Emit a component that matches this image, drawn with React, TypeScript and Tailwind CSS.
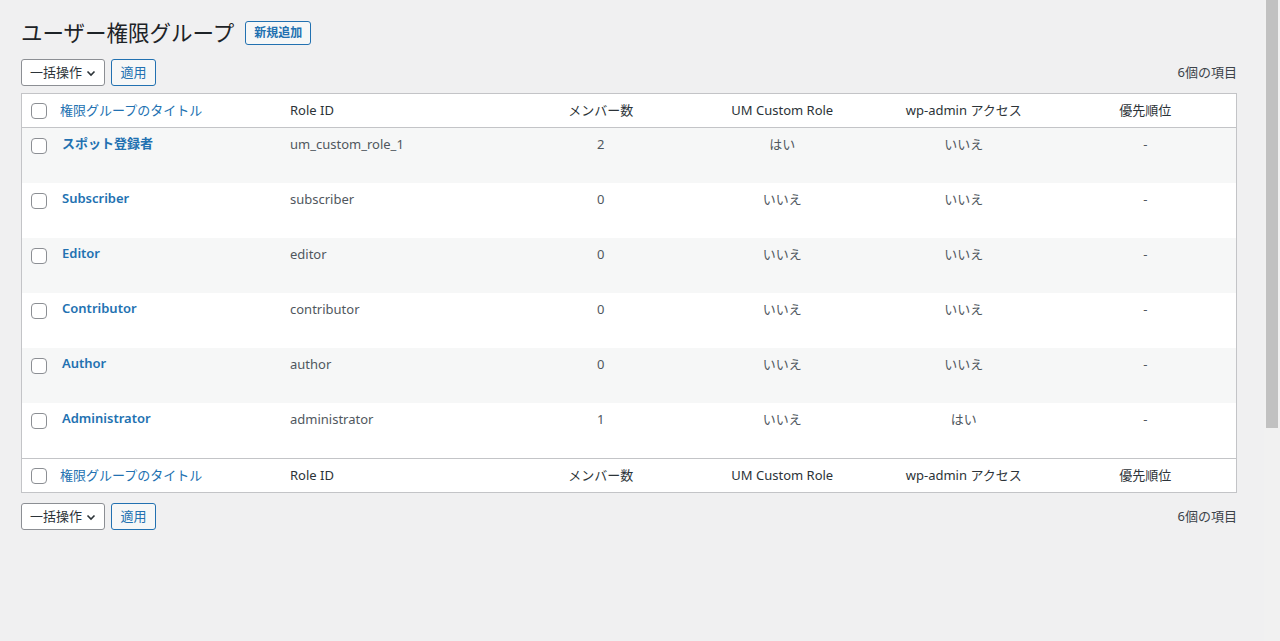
import React from "react";

const rows = [
  { title: "スポット登録者", id: "um_custom_role_1", members: "2", um: "はい", admin: "いいえ", prio: "-" },
  { title: "Subscriber", id: "subscriber", members: "0", um: "いいえ", admin: "いいえ", prio: "-" },
  { title: "Editor", id: "editor", members: "0", um: "いいえ", admin: "いいえ", prio: "-" },
  { title: "Contributor", id: "contributor", members: "0", um: "いいえ", admin: "いいえ", prio: "-" },
  { title: "Author", id: "author", members: "0", um: "いいえ", admin: "いいえ", prio: "-" },
  { title: "Administrator", id: "administrator", members: "1", um: "いいえ", admin: "はい", prio: "-" },
];

const grid = "grid grid-cols-[28px_230px_230px_1fr_1fr_1fr_1fr]";

function Checkbox() {
  return <span className="block w-[16px] h-[16px] rounded-[4px] border border-[#8c8f94] bg-white" />;
}

function HeadRow({ top }: { top?: boolean }) {
  return (
    <div
      className={`${grid} h-[34px] items-center text-[13px] text-[#2c3338] bg-white ${
        top ? "border-b border-[#c3c4c7]" : "border-t border-[#c3c4c7]"
      }`}
    >
      <div className="pl-[9px]">
        <Checkbox />
      </div>
      <div className="pl-[10px] text-[#2271b1]">権限グループのタイトル</div>
      <div className="pl-[10px]">Role ID</div>
      <div className="text-center">メンバー数</div>
      <div className="text-center">UM Custom Role</div>
      <div className="text-center">wp-admin アクセス</div>
      <div className="text-center">優先順位</div>
    </div>
  );
}

function Actions() {
  return (
    <div className="flex items-center justify-between h-[27px]">
      <div className="flex items-center gap-[6px]">
        <div className="flex items-center h-[27px] w-[84px] pl-[8px] pr-[7px] justify-between bg-white border border-[#8c8f94] rounded-[3px] text-[13px] text-[#2c3338]">
          <span>一括操作</span>
          <svg width="12" height="12" viewBox="0 0 12 12" fill="none" stroke="#2c3338" strokeWidth="1.6">
            <path d="M2.5 4.5 6 8l3.5-3.5" />
          </svg>
        </div>
        <div className="flex items-center justify-center h-[27px] w-[45px] bg-[#f6f7f7] border border-[#2271b1] rounded-[3px] text-[13px] text-[#2271b1]">
          適用
        </div>
      </div>
      <div className="text-[13px] text-[#3c434a]">6個の項目</div>
    </div>
  );
}

export default function App() {
  return (
    <div
      className="flex h-[641px] bg-[#f0f0f1] overflow-hidden"
      style={{ fontFamily: '"Noto Sans", "Noto Sans CJK JP", sans-serif' }}
    >
      <main className="flex-1 pl-[21px] pr-[27px] pt-[16px]">
        <div className="flex items-center gap-[11px] h-[33px]">
          <h1 className="text-[21.5px] font-normal text-[#1d2327] leading-none">ユーザー権限グループ</h1>
          <div className="flex items-center h-[24px] px-[8px] border border-[#2271b1] rounded-[3px] bg-[#f6f7f7] text-[12px] font-semibold text-[#2271b1]">
            新規追加
          </div>
        </div>
        <div className="mt-[10px]">
          <Actions />
        </div>
        <div className="mt-[7px] border border-[#c3c4c7] bg-white">
          <HeadRow top />
          {rows.map((r, i) => (
            <div key={r.id} className={`${grid} h-[55px] items-start text-[13px] text-[#50575e] ${i % 2 === 0 ? "bg-[#f6f7f7]" : "bg-white"}`}>
              <div className="pl-[9px] pt-[10px]">
                <Checkbox />
              </div>
              <div className="pl-[12px] pt-[6px] text-[13px] font-semibold text-[#2271b1]">{r.title}</div>
              <div className="pl-[10px] pt-[7px]">{r.id}</div>
              <div className="text-center pt-[7px]">{r.members}</div>
              <div className="text-center pt-[7px]">{r.um}</div>
              <div className="text-center pt-[7px]">{r.admin}</div>
              <div className="text-center pt-[7px]">{r.prio}</div>
            </div>
          ))}
          <HeadRow />
        </div>
        <div className="mt-[10px]">
          <Actions />
        </div>
      </main>
      <div className="w-[16px] bg-[#f1f1f1] px-[2px]">
        <div className="h-[428px] bg-[#c1c1c1]" />
      </div>
    </div>
  );
}
